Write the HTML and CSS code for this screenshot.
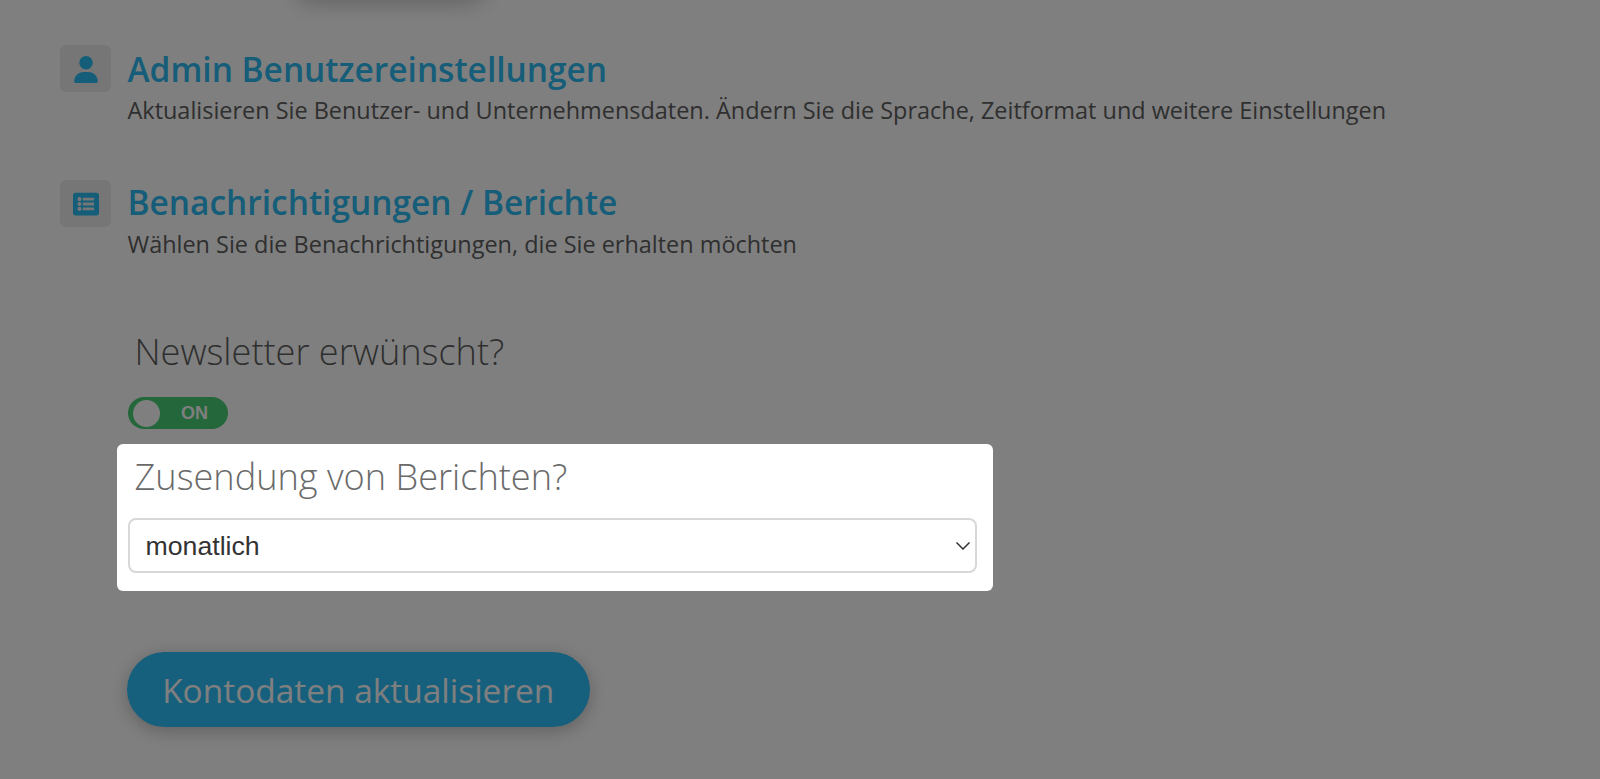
FILE: index.html
```html
<!DOCTYPE html>
<html lang="de">
<head>
    <meta charset="UTF-8">
    <meta name="viewport" content="width=device-width, initial-scale=1.0">
    <title>Kontoeinstellungen</title>
    <link rel="stylesheet" href="styles.css">
</head>
<body>
    <div class="top-button"></div>

    <section class="settings-row first">
        <div class="icon-tile user-tile">
            <svg viewBox="0 0 448 512" width="24" height="27"><path d="M224 256a128 128 0 1 0 0-256 128 128 0 0 0 0 256zm-45.700 48C79.800 304 0 383.800 0 482.300 0 498.700 13.300 512 29.700 512h388.600c16.400 0 29.700-13.300 29.700-29.700C448 383.800 368.200 304 269.700 304h-91.400z"/></svg>
        </div>
        <div>
            <h2>Admin Benutzereinstellungen</h2>
            <p>Aktualisieren Sie Benutzer- und Unternehmensdaten. Ändern Sie die Sprache, Zeitformat und weitere Einstellungen</p>
        </div>
    </section>

    <section class="settings-row second">
        <div class="icon-tile">
            <svg viewBox="0 0 512 512" width="26" height="26"><path fill-rule="evenodd" d="M464 480H48c-26.510 0-48-21.490-48-48V80c0-26.510 21.490-48 48-48h416c26.510 0 48 21.490 48 48v352c0 26.510-21.490 48-48 48zM128 120c-22.091 0-40 17.909-40 40s17.909 40 40 40 40-17.909 40-40-17.909-40-40-40zm0 96c-22.091 0-40 17.909-40 40s17.909 40 40 40 40-17.909 40-40-17.909-40-40-40zm0 96c-22.091 0-40 17.909-40 40s17.909 40 40 40 40-17.909 40-40-17.909-40-40-40zm288-136v-32c0-6.627-5.373-12-12-12H204c-6.627 0-12 5.373-12 12v32c0 6.627 5.373 12 12 12h200c6.627 0 12-5.373 12-12zm0 96v-32c0-6.627-5.373-12-12-12H204c-6.627 0-12 5.373-12 12v32c0 6.627 5.373 12 12 12h200c6.627 0 12-5.373 12-12zm0 96v-32c0-6.627-5.373-12-12-12H204c-6.627 0-12 5.373-12 12v32c0 6.627 5.373 12 12 12h200c6.627 0 12-5.373 12-12z"/></svg>
        </div>
        <div class="second-text">
            <h2>Benachrichtigungen / Berichte</h2>
            <p>Wählen Sie die Benachrichtigungen, die Sie erhalten möchten</p>
        </div>
    </section>

    <section class="form-area">
        <h3 class="newsletter-label">Newsletter erwünscht?</h3>
        <div class="toggle">
            <span class="toggle-knob"></span>
            <span class="toggle-text">ON</span>
        </div>

        <div class="highlight-box">
            <h3>Zusendung von Berichten?</h3>
            <div class="select-wrap">
                <select class="report-select">
                    <option>monatlich</option>
                    <option>wöchentlich</option>
                    <option>täglich</option>
                </select>
                <svg class="select-arrow" viewBox="0 0 14 8" width="14" height="8"><path d="M0.500 0.500 7 7 13.500 0.500"/></svg>
            </div>
        </div>

        <button class="save-button">Kontodaten aktualisieren</button>
    </section>

    <div class="overlay"></div>
</body>
</html>
```

FILE: styles.css
```css
* {
    box-sizing: border-box;
}
html, body {
    height: 100%;
}
body {
    font-family: "Open Sans", Arial, sans-serif;
    margin: 0;
    padding: 0;
    background-color: #fff;
    color: #5e5e5e;
    overflow: hidden;
}
.overlay {
    position: fixed;
    top: 0;
    left: 0;
    width: 100%;
    height: 100%;
    background-color: rgba(0, 0, 0, 0.5);
    z-index: 10;
}
.top-button {
    width: 190px;
    height: 30px;
    margin: -30px 0 0 295px;
    border-radius: 30px;
    box-shadow: 0 2px 22px rgba(0, 0, 0, 0.25);
}
.settings-row {
    display: flex;
    gap: 16.500px;
    padding-left: 60px;
}
.settings-row.first {
    margin-top: 45px;
}
.settings-row.second {
    margin-top: 53px;
}
.second-text {
    margin-top: -2px;
}
.second-text p {
    padding-top: 1px;
}
.icon-tile {
    display: flex;
    align-items: center;
    justify-content: center;
    flex: none;
    width: 51px;
    height: 47px;
    background-color: #ececec;
    border-radius: 6px;
}
.icon-tile svg {
    fill: #2abcf4;
}
.user-tile {
    padding-top: 2px;
}
h2 {
    margin: 0;
    font-size: 33.450px;
    line-height: 48px;
    font-weight: 600;
    color: #2bbaf0;
}
.settings-row p {
    margin: 0;
    font-size: 23.450px;
    line-height: 34px;
}
.form-area {
    padding-left: 127.500px;
}
h3 {
    margin: 0;
    font-size: 36.150px;
    line-height: 50px;
    font-weight: 300;
}
.newsletter-label {
    margin: 65px 0 0 7px;
}
.toggle {
    display: flex;
    align-items: center;
    width: 100.500px;
    height: 32px;
    margin-top: 21px;
    padding: 0 5px;
    background-color: #48cf74;
    border-radius: 16px;
}
.toggle-knob {
    width: 27px;
    height: 27px;
    background-color: #fff;
    border-radius: 50%;
}
.toggle-text {
    margin-left: 21.500px;
    font-family: "Liberation Sans", Arial, sans-serif;
    font-size: 18px;
    font-weight: 700;
    color: #fff;
}
.highlight-box {
    position: relative;
    z-index: 20;
    width: 876.500px;
    height: 147px;
    margin: 15px 0 0 -11px;
    padding: 7px 16px 0 11px;
    background-color: #fff;
    border-radius: 6px;
}
.highlight-box h3 {
    margin-left: 7px;
    color: #6a6a6a;
}
.select-wrap {
    position: relative;
    margin-top: 17px;
}
.report-select {
    display: block;
    width: 100%;
    height: 55px;
    padding: 0 16px;
    font-family: "Liberation Sans", Arial, sans-serif;
    font-size: 26.700px;
    color: #333;
    background-color: #fff;
    border: 2px solid #d8d8d8;
    border-radius: 8px;
    appearance: none;
}
.select-arrow {
    position: absolute;
    top: 24px;
    right: 7px;
    fill: none;
    stroke: #333;
    stroke-width: 1.500;
    pointer-events: none;
}
.save-button {
    display: block;
    width: 462.500px;
    height: 75px;
    margin: 61px 0 0 -0.500px;
    font-family: "Open Sans", Arial, sans-serif;
    font-size: 33.450px;
    color: #fff;
    background-color: #2cc0fa;
    border: none;
    border-radius: 38px;
    box-shadow: 0 4px 18px rgba(0, 0, 0, 0.25);
}
```
